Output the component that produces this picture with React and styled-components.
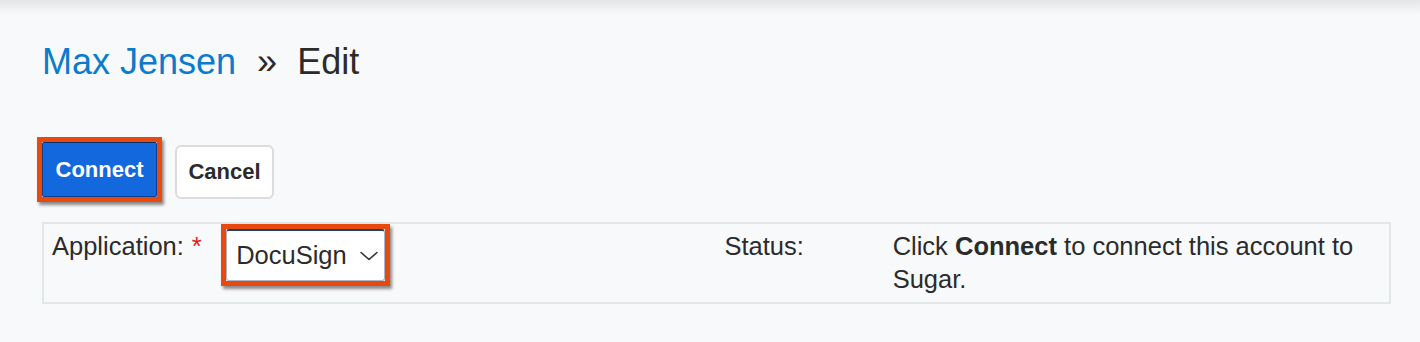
import React from 'react';
import styled, { createGlobalStyle } from 'styled-components';

const GlobalStyle = createGlobalStyle`
  html, body {
    margin: 0;
    padding: 0;
    background: #f8f9fb;
  }
  body {
    font-family: "Liberation Sans", Arial, sans-serif;
    color: #333;
  }
`;

// Sombra de la barra superior que queda fuera de la vista
const TopShade = styled.div`
  height: 14px;
  background: linear-gradient(#e4e5e7, #f8f9fb);
`;

const Page = styled.div`
  padding: 0 29px 40px 42px;
`;

const Title = styled.h1`
  margin: 28px 0 0;
  font-size: 36px;
  line-height: 40px;
  font-weight: normal;
  color: #2b2b2b;
  display: flex;
  align-items: baseline;
`;

const Crumb = styled.a`
  color: #0a7bcf;
  text-decoration: none;
`;

const Separator = styled.span`
  margin: 0 20px 0 21px;
  color: #2b2b2b;
`;

const Toolbar = styled.div`
  display: flex;
  align-items: flex-start;
  gap: 13px;
  margin: 55px 0 0 -5px;
`;

// Recuadro naranja de anotación con sombra
const Highlight = styled.div`
  display: inline-flex;
  border: 5px solid #e7490f;
  box-shadow: 2px 3px 3px rgba(0, 0, 0, 0.45);
`;

const Button = styled.button`
  font-family: "Liberation Sans", Arial, sans-serif;
  font-size: 22px;
  font-weight: bold;
  height: ${(p) => p.$height}px;
  width: ${(p) => p.$width}px;
  padding: 0;
  border-radius: ${(p) => (p.$primary ? '2px' : '6px')};
  cursor: pointer;
  color: ${(p) => (p.$primary ? '#fff' : '#2b2b2b')};
  background: ${(p) => (p.$primary ? '#1468de' : '#fff')};
  border: ${(p) => (p.$primary ? '1px solid #0d3f8c' : '2px solid #dcdcdc')};
  border-top-color: ${(p) => (p.$primary ? '#0a2f6a' : '#dcdcdc')};
  margin-top: ${(p) => p.$offset || 0}px;
`;

const Form = styled.div`
  margin-top: 20px;
  border: 2px solid #e1e7e9;
  display: grid;
  grid-template-columns: 12.5% 37.5% 12.5% 37.5%;
`;

const Cell = styled.div`
  font-size: 25.5px;
  line-height: 33px;
  padding: ${(p) => (p.$field ? '0 8px 6px 9px' : '6px 8px')};
  color: #2b2b2b;
`;

const Required = styled.span`
  color: #e01b1b;
  margin-left: 8px;
`;

const Select = styled.div`
  display: flex;
  align-items: center;
  justify-content: space-between;
  width: 159px;
  height: 52px;
  box-sizing: border-box;
  padding: 0 6px 0 9px;
  background: #fff;
  border: 1px solid #a9b6c6;
  border-top: 2px solid #1f3f6e;
  border-radius: 3px;
  font-size: 25.5px;
  color: #2b2b2b;
`;

const Chevron = () => (
  <svg width="18" height="10" viewBox="0 0 18 10" fill="none">
    <path d="M1 1.5 L9 8.5 L17 1.5" stroke="#333" strokeWidth="1.6" strokeLinecap="round" strokeLinejoin="round" />
  </svg>
);

export default function App() {
  return (
    <>
      <GlobalStyle />
      <TopShade />
      <Page>
        <Title>
          <Crumb href="#">Max Jensen</Crumb>
          <Separator>»</Separator>
          <span>Edit</span>
        </Title>

        <Toolbar>
          <Highlight>
            <Button $primary $width={115} $height={55}>Connect</Button>
          </Highlight>
          <Button $width={99} $height={54} $offset={8}>Cancel</Button>
        </Toolbar>

        <Form>
          <Cell>
            Application:<Required>*</Required>
          </Cell>
          <Cell $field>
            <Highlight>
              <Select>
                <span>DocuSign</span>
                <Chevron />
              </Select>
            </Highlight>
          </Cell>
          <Cell>Status:</Cell>
          <Cell>
            Click <b>Connect</b> to connect this account to Sugar.
          </Cell>
        </Form>
      </Page>
    </>
  );
}
